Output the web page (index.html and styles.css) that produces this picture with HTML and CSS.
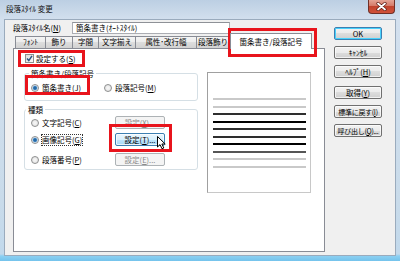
FILE: index.html
```html
<!DOCTYPE html>
<html lang="ja">
<head>
	<meta charset="utf-8">
	<title>段落スタイル 変更</title>
	<link rel="stylesheet" href="styles.css">
</head>
<body>

<!-- dialog -->
<div class="dlg">

	<div class="dlg-title">
		<span class="dlg-caption">段落ｽﾀｲﾙ 変更</span>
		<span class="dlg-close">
			<svg width="11" height="9" viewBox="0 0 11 9"><path d="M2 1.5 L9 7.5 M9 1.5 L2 7.5" stroke="#5a1a12" stroke-width="3.2" stroke-linecap="round"/><path d="M2 1.5 L9 7.5 M9 1.5 L2 7.5" stroke="#fff" stroke-width="1.8" stroke-linecap="round"/></svg>
		</span>
	</div>

	<div class="dlg-client">
		<div class="dlg-main">
			<div class="name-row">
				<span class="name-label">段落ｽﾀｲﾙ名(<u>N</u>)</span>
				<span class="textbox">箇条書き(ｵｰﾄｽﾀｲﾙ)</span>
			</div>

			<ul class="tabs">
				<li class="tab tab-1">ﾌｫﾝﾄ</li>
				<li class="tab tab-2">飾り</li>
				<li class="tab tab-3">字間</li>
				<li class="tab tab-4">文字揃え</li>
				<li class="tab tab-5">属性･改行幅</li>
				<li class="tab tab-6">段落飾り</li>
				<li class="tab tab-on">箇条書き/段落記号</li>
			</ul>

			<div class="panel">
				<div class="panel-left">
					<div class="chk-row">
						<span class="chk"><svg width="7" height="7" viewBox="0 0 7 7"><path d="M1 3.6 L2.8 5.6 L6 0.8" fill="none" stroke="#2b5585" stroke-width="1.5"/></svg></span>
						<span>設定する(<u>S</u>)</span>
					</div>

					<div class="group group-type">
						<span class="group-title">箇条書き/段落記号</span>
						<div class="type-row">
							<span class="opt"><span class="radio on"></span>箇条書き(<u>J</u>)</span>
							<span class="opt"><span class="radio"></span>段落記号(<u>M</u>)</span>
						</div>
					</div>

					<div class="group group-kind">
						<span class="group-title">種類</span>
						<div class="kind-list">
							<span class="opt"><span class="radio"></span>文字記号(<u>C</u>)</span>
							<span class="btn btn-off">設定(<u>X</u>)...</span>

							<span class="opt"><span class="radio on"></span><span class="focus">画像記号(<u>G</u>)</span></span>
							<span class="btn btn-hot">設定(<u>T</u>)...</span>

							<span class="opt opt-last"><span class="radio"></span>段落番号(<u>P</u>)</span>
							<span class="btn btn-off opt-last">設定(<u>E</u>)...</span>
						</div>
					</div>
				</div>

				<div class="preview">
					<span class="pv-line pv-light"></span>
					<span class="pv-line pv-light"></span>
					<span class="pv-line pv-dark"></span>
					<span class="pv-line pv-black"></span>
					<span class="pv-line pv-dark"></span>
					<span class="pv-line pv-dark"></span>
					<span class="pv-line pv-black"></span>
					<span class="pv-line pv-gray"></span>
					<span class="pv-line pv-light"></span>
					<span class="pv-line pv-light"></span>
				</div>
			</div>
		</div>

		<div class="dlg-buttons">
			<span class="btn btn-default">OK</span>
			<span class="btn">ｷｬﾝｾﾙ</span>
			<span class="btn">ﾍﾙﾌﾟ(<u>H</u>)</span>
			<span class="btn btn-gap">取得(<u>Y</u>)</span>
			<span class="btn btn-tight">標準に戻す(<u>I</u>)</span>
			<span class="btn btn-tight">呼び出し(<u>Q</u>)...</span>
		</div>
	</div>

	<!-- red marks -->
	<span class="mark mark-tab"></span>
	<span class="mark mark-chk"></span>
	<span class="mark mark-radio"></span>
	<span class="mark mark-btn"></span>

	<svg class="cursor" width="10" height="14" viewBox="0 0 10 14"><path d="M0.5 0.5 L0.5 11 L3 8.6 L5 12.8 L6.8 12 L4.9 8 L8.2 8 Z" fill="#fff" stroke="#000" stroke-width="1" stroke-linejoin="round"/></svg>

</div>
<!-- //dialog -->

</body>
</html>
```

FILE: styles.css
```css
*{padding: 0; margin: 0; border: 0; box-sizing: border-box;}
body {width: 400px;height: 261px;overflow: hidden;font-family: "Noto Sans CJK JP", "Noto Sans", sans-serif;font-size: 7.5px;line-height: 10px;color: #000;white-space: nowrap;}
ul {list-style: none;}
u {text-decoration: underline;text-underline-offset: 1px;}

/* window frame */
.dlg {position: relative;display: flex;flex-direction: column;width: 400px;height: 261px;padding: 0 5px 6px 5px;
    background: linear-gradient(to bottom, #bccfe3 0, #d3e0ee 20px, #c9dbea 200px, #c2d9ec 254px, #8cd0f2 256px, #74c3ec 261px);}
.dlg-title {display: flex;justify-content: space-between;align-items: flex-start;height: 20px;}
.dlg-caption {margin: 4px 0 0 1px;color: #111;}
.dlg-close {display: flex;align-items: center;justify-content: center;width: 27px;height: 14px;
    border: 1px solid #6f3027;border-top: 0;border-radius: 0 0 4px 4px;
    background: linear-gradient(to bottom, #e4a394 0, #d57a68 45%, #c1432d 50%, #d1523a 100%);}

.dlg-client {display: flex;flex: 1;background: #f0f0f0;box-shadow: 0 0 0 1px #9aabbd;}
.dlg-main {display: flex;flex-direction: column;width: 320px;padding: 2px 0 0 8px;}

/* name row */
.name-row {display: flex;align-items: center;height: 12px;}
.name-label {width: 59px;}
.textbox {width: 158px;height: 12px;padding-left: 3px;border: 1px solid #abadb3;border-top-color: #8e9197;background: #fff;line-height: 10px;}

/* tabs */
.tabs {display: flex;align-items: flex-end;height: 14px;margin-left: 2px;}
.tab {height: 12px;margin-right: -1px;border: 1px solid #898c95;border-bottom: 0;text-align: center;line-height: 10px;
    background: linear-gradient(to bottom, #f4f4f4, #ebebeb 50%, #dddddd 50%, #d2d2d2);}
.tab-1 {width: 31px;}
.tab-2 {width: 28px;}
.tab-3 {width: 27px;}
.tab-4 {width: 38px;}
.tab-5 {width: 62px;}
.tab-6 {width: 34px;}
.tab-on {position: relative;z-index: 1;width: 82px;height: 16px;margin: 0 0 -1px 1px;padding-top: 3px;background: #fff;}

.panel {display: flex;width: 312px;height: 204px;padding: 5px 0 0 10px;border: 1px solid #898c95;background: #fff;}
.panel-left {display: flex;flex-direction: column;width: 174px;}

/* checkbox, radio */
.chk-row {display: flex;align-items: center;gap: 2px;height: 9px;margin-left: 1px;}
.chk {display: flex;align-items: center;justify-content: center;width: 9px;height: 9px;border: 1px solid #8e8f8f;background: linear-gradient(135deg, #dcdcdc, #fafafa);}
.radio {display: inline-block;width: 8px;height: 8px;margin-right: 3px;border: 1px solid #8e8f8f;border-radius: 50%;background: radial-gradient(circle, #f8f8f8 0, #dedede 100%);}
.radio.on {background: radial-gradient(circle, #1d5a92 0, #2f78b8 1.5px, #cfe0ef 2.6px, #f4f4f4 3.2px);}
.opt {display: flex;align-items: center;height: 13px;}
.focus {outline: 1px dotted #333;outline-offset: 0;}

/* group boxes */
.group {display: flex;flex-direction: column;border: 1px solid #d5dfe5;border-radius: 3px;}
.group-title {align-self: flex-start;margin: -5px 0 0 4px;padding: 0 2px;background: #fff;}
.group-type {height: 28px;margin-top: 10px;}
.group-type .type-row {display: grid;grid-template-columns: 73px auto;margin: 2px 0 0 6px;}
.group-kind {height: 61px;margin-top: 8px;}
.group-kind .group-title {margin-left: 1px;}
.kind-list {display: grid;grid-template-columns: 84px 50px;row-gap: 4px;margin: 1px 0 0 6px;}
.kind-list .opt-last {margin-top: 3px;}

/* buttons */
.btn {display: flex;align-items: center;justify-content: center;height: 13px;border: 1px solid #707070;border-radius: 2px;
    background: linear-gradient(to bottom, #f2f2f2, #ebebeb 50%, #dddddd 50%, #cfcfcf);box-shadow: inset 0 0 0 1px rgba(255,255,255,.7);}
.btn-off {color: #8a8a8a;border-color: #adb2b5;background: #f4f4f4;box-shadow: none;}
.btn-hot {border-color: #3c7fb1;background: linear-gradient(to bottom, #eaf6fd, #d9f0fc 50%, #bee6fd 50%, #a7d9f5);}
.btn-default {border-color: #3c7fb1;box-shadow: inset 0 0 0 1px #48d1fc;}
.btn-tight {font-size: 7px;letter-spacing: -0.3px;}

.dlg-buttons {display: flex;flex-direction: column;gap: 6px;width: 48px;margin-left: 9px;padding-top: 7px;}
.dlg-buttons .btn-gap {margin-top: 2px;}

/* preview */
.preview {display: flex;flex-direction: column;gap: 5.5px;width: 104px;height: 121px;margin: 18px 0 0 9px;padding: 25px 4px 0 5px;border: 1px solid #a0a0a0;border-right-color: #c8c8c8;border-bottom-color: #c8c8c8;background: #fff;}
.pv-line {display: block;height: 2px;}
.pv-light {background: #c9c9c9;}
.pv-dark {background: #2e2e2e;}
.pv-black {background: #000;}
.pv-gray {background: #555;}

/* red marks */
.mark {position: absolute;border: 3px solid #e8141c;}
.mark-tab {left: 228px;top: 28px;width: 89px;height: 29px;}
.mark-chk {left: 18px;top: 50px;width: 67px;height: 17px;}
.mark-radio {left: 25px;top: 75px;width: 65px;height: 20px;}
.mark-btn {left: 109px;top: 124px;width: 63px;height: 28px;}

.cursor {position: absolute;left: 157px;top: 136px;}
```
